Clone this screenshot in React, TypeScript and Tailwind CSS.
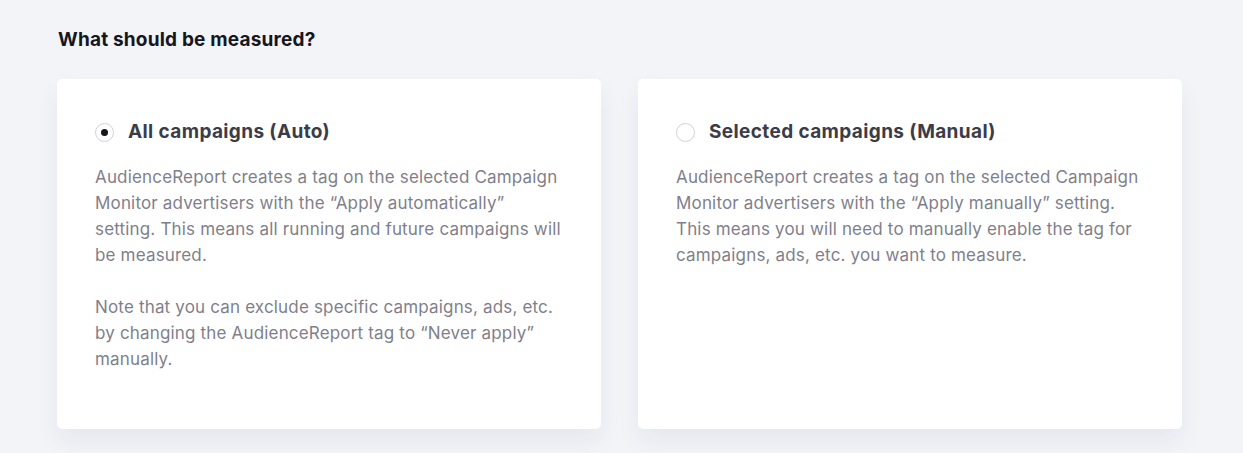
import { useState } from 'react'

type Mode = 'auto' | 'manual'

const OPTIONS: { key: Mode; title: string; paras: string[] }[] = [
  {
    key: 'auto',
    title: 'All campaigns (Auto)',
    paras: [
      'AudienceReport creates a tag on the selected Campaign Monitor advertisers with the \u201cApply automatically\u201d setting. This means all running and future campaigns will be measured.',
      'Note that you can exclude specific campaigns, ads, etc. by changing the AudienceReport tag to \u201cNever apply\u201d manually.',
    ],
  },
  {
    key: 'manual',
    title: 'Selected campaigns (Manual)',
    paras: [
      'AudienceReport creates a tag on the selected Campaign Monitor advertisers with the \u201cApply manually\u201d setting. This means you will need to manually enable the tag for campaigns, ads, etc. you want to measure.',
    ],
  },
]

export default function App() {
  const [mode, setMode] = useState<Mode>('auto')

  return (
    <div className="min-h-[453px] bg-[#f3f4f8] px-[57px] pt-[28px] font-['Inter',sans-serif]">
      <h2 className="pl-px text-[19px] font-bold leading-[24px] tracking-[0.01em] text-[#16161f]">What should be measured?</h2>

      <div className="mt-[27px] flex gap-[37px]">
        {OPTIONS.map(o => (
          <label
            key={o.key}
            onClick={() => setMode(o.key)}
            className="h-[350px] w-[544px] cursor-pointer rounded-[5px] bg-white pl-[38px] pr-[38px] pt-[39px] shadow-[0_12px_24px_rgba(30,35,60,0.06)]"
          >
            <div className="flex items-center gap-[14px]">
              <span className="flex h-[19px] w-[19px] items-center justify-center rounded-full border border-[#cfd2dc] bg-white">
                {mode === o.key && <span className="h-[7px] w-[7px] rounded-full bg-[#16161f]" />}
              </span>
              <span className="text-[19px] font-bold leading-[28px] tracking-[0.02em] text-[#3c3c48]">{o.title}</span>
            </div>
            <div className="mt-[18px] space-y-[26px] text-[17px] leading-[26px] tracking-[0.01em] text-[#7f7f8c]">
              {o.paras.map((p, i) => (
                <p key={i}>{p}</p>
              ))}
            </div>
          </label>
        ))}
      </div>
    </div>
  )
}
